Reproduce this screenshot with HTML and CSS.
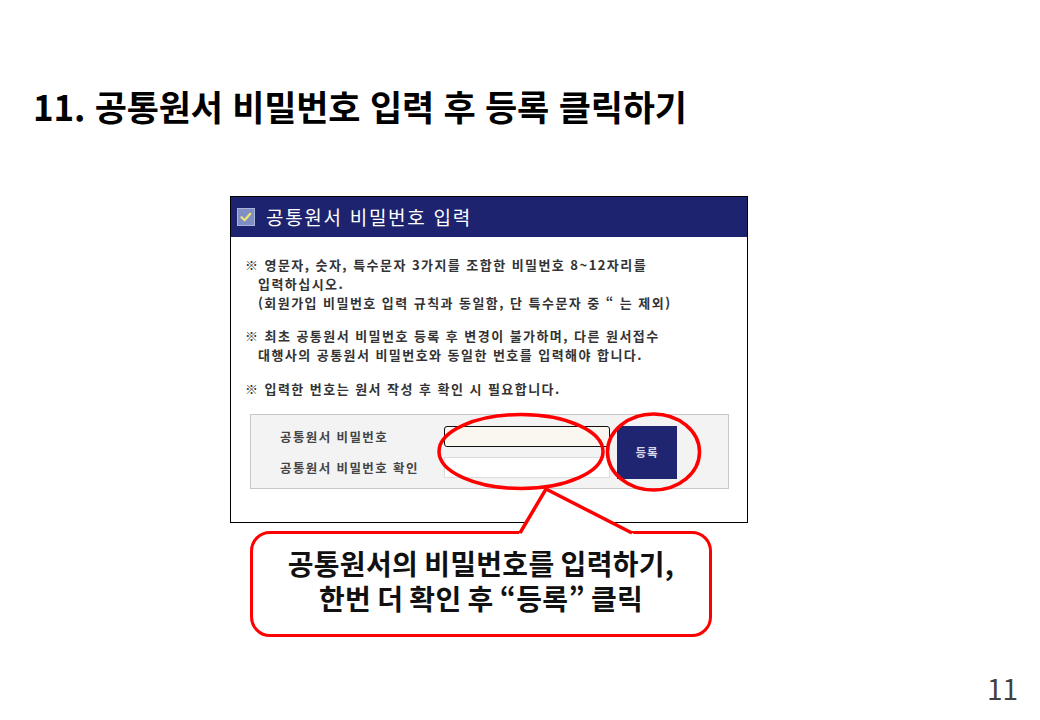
FILE: index.html
```html
<!DOCTYPE html>
<html lang="ko">
<head>
<meta charset="utf-8">
<title>공통원서 비밀번호 입력</title>
<link rel="stylesheet" href="styles.css">
</head>
<body>
<div class="slide">
  <h1 class="title">11. 공통원서 비밀번호 입력 후 등록 클릭하기</h1>

  <div class="panel">
    <div class="panel-head">
      <svg class="check" width="18" height="18" viewBox="0 0 18 18">
        <rect x="0.5" y="0.5" width="17" height="17" fill="#7f8fc6" stroke="#a9b4dc"/>
        <path d="M4.5 9.2 L7.6 12.2 L13.2 5.8" fill="none" stroke="#f2e36a" stroke-width="2.2" stroke-linecap="round" stroke-linejoin="round"/>
      </svg>
      <span class="head-text">공통원서 비밀번호 입력</span>
    </div>
    <div class="panel-body">
      <p class="note">※ 영문자, 숫자, 특수문자 3가지를 조합한 비밀번호 8~12자리를<br><span class="ind">입력하십시오.</span><br><span class="ind">(회원가입 비밀번호 입력 규칙과 동일함, 단 특수문자 중 “ 는 제외)</span></p>
      <p class="note">※ 최초 공통원서 비밀번호 등록 후 변경이 불가하며, 다른 원서접수<br><span class="ind">대행사의 공통원서 비밀번호와 동일한 번호를 입력해야 합니다.</span></p>
      <p class="note">※ 입력한 번호는 원서 작성 후 확인 시 필요합니다.</p>
      <div class="form">
        <label class="lbl">공통원서 비밀번호</label>
        <div class="inp inp-active"></div>
        <button class="btn">등록</button>
        <label class="lbl">공통원서 비밀번호 확인</label>
        <div class="inp"></div>
      </div>
    </div>
  </div>

  <div class="callout">
    <p class="callout-line">공통원서의 비밀번호를 입력하기,</p>
    <p class="callout-line">한번 더 확인 후 “등록” 클릭</p>
  </div>

  <div class="pageno">11</div>

  <svg class="marks" width="1040" height="720" viewBox="0 0 1040 720">
    <polygon points="519,534 546,489 634,534" fill="#fff"/>
    <polyline points="520,533 546,489 632,533" fill="none" stroke="#f00" stroke-width="3.5" stroke-linejoin="miter"/>
    <ellipse cx="521" cy="451.5" rx="82" ry="37" fill="none" stroke="#f00" stroke-width="3.5"/>
    <ellipse cx="653.5" cy="452" rx="46" ry="38" fill="none" stroke="#f00" stroke-width="3.5"/>
  </svg>
</div>
</body>
</html>
```

FILE: styles.css
```css
* { box-sizing: border-box; }
html, body { margin: 0; padding: 0; background: #fff; }
body {
  font-family: "Noto Sans CJK KR", "Noto Sans", sans-serif;
}
.slide {
  position: relative;
  width: 1040px;
  height: 720px;
  overflow: hidden;
  display: flex;
  flex-direction: column;
}
.title {
  margin: 0;
  padding: 84px 0 0 33px;
  font-size: 35px;
  line-height: 44px;
  font-weight: 700;
  color: #000;
  letter-spacing: -0.2px;
}
.panel {
  margin: 68px 0 0 230px;
  width: 518px;
  height: 327px;
  border: 1px solid #000;
  background: #fff;
}
.panel-head {
  height: 40px;
  background: #1e236f;
  display: flex;
  align-items: center;
  padding-left: 6px;
  gap: 11px;
}
.check { display: block; flex: none; }
.head-text {
  color: #fff;
  font-size: 19px;
  letter-spacing: 1.7px;
  line-height: 1;
  padding-bottom: 1px;
}
.panel-body {
  padding: 19px 18px 0 14px;
}
.note {
  margin: 0 0 15px 0;
  font-size: 13px;
  line-height: 18.8px;
  font-weight: 700;
  color: #333;
  letter-spacing: 1.45px;
  white-space: nowrap;
}
.ind { padding-left: 13px; }
.form {
  margin: 14px 0 0 5px;
  width: 479px;
  height: 75px;
  background: #f3f3f3;
  border: 1px solid #c8c8c8;
  display: grid;
  grid-template-columns: 157px 166px 60px;
  grid-template-rows: 21px 21px;
  column-gap: 7px;
  row-gap: 10px;
  padding: 11px 0 0 29px;
  align-items: center;
}
.lbl {
  font-size: 12.5px;
  font-weight: 700;
  color: #444;
  letter-spacing: 1.4px;
  line-height: 21px;
  white-space: nowrap;
}
.inp {
  height: 21px;
  background: #fff;
  border: 1px solid #dcdcdc;
}
.inp-active {
  background: #faf7f1;
  border: 1.5px solid #111;
  border-radius: 3px;
}
.btn {
  grid-row: 1 / span 2;
  grid-column: 3;
  height: 53px;
  align-self: start;
  border: none;
  background: #1f2570;
  color: #d8d8e6;
  font-family: "Noto Sans CJK KR", sans-serif;
  font-size: 11.5px;
  font-weight: 700;
  letter-spacing: 1px;
  padding: 0;
}
.callout {
  margin: 8px 0 0 250px;
  width: 462px;
  height: 106px;
  border: 3.5px solid #f00;
  border-radius: 20px;
  background: #fff;
  display: flex;
  flex-direction: column;
  align-items: center;
  justify-content: center;
  padding-bottom: 6px;
}
.callout-line {
  margin: 0;
  text-align: center;
  font-size: 28px;
  line-height: 35px;
  height: 35px;
  overflow: visible;
  font-weight: 700;
  color: #111;
  letter-spacing: 0.3px;
  word-spacing: -2px;
  white-space: nowrap;
}
.pageno {
  margin-top: auto;
  align-self: flex-end;
  padding: 0 22px 15px 0;
  font-size: 28px;
  line-height: 34px;
  color: #404040;
}
.marks {
  position: absolute;
  left: 0;
  top: 0;
  pointer-events: none;
}
```
